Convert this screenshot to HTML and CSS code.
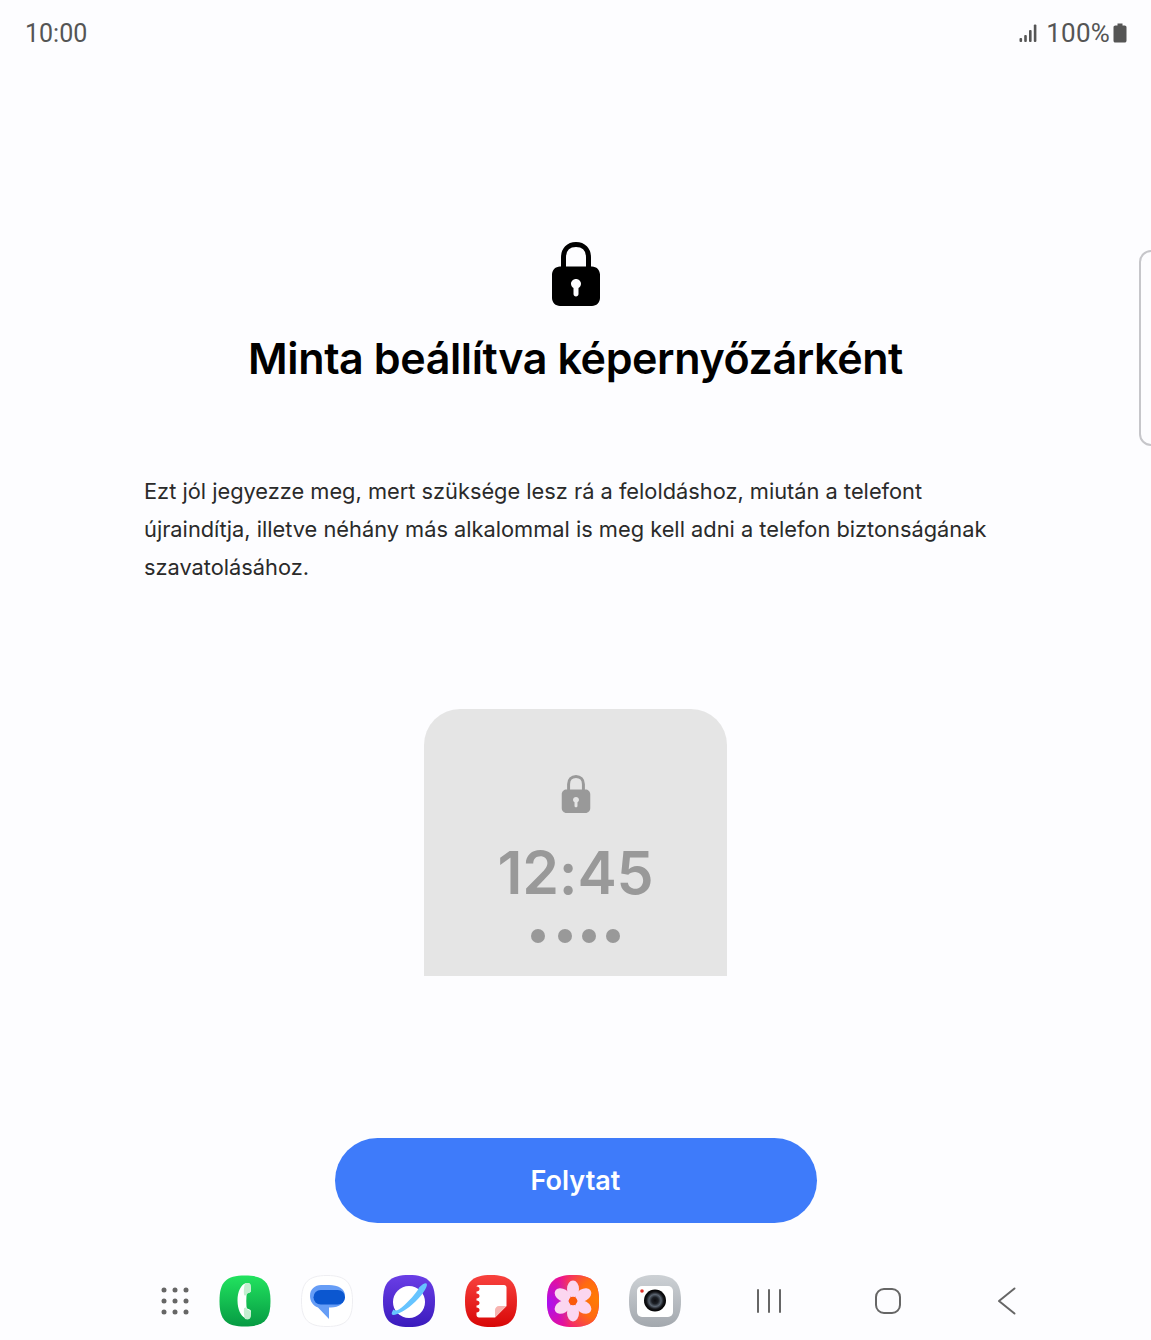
FILE: index.html
```html
<!DOCTYPE html>
<html lang="hu">
<head>
    <meta charset="UTF-8">
    <meta name="viewport" content="width=device-width, initial-scale=1.0">
    <title>Minta beállítva képernyőzárként</title>
    <link rel="stylesheet" href="styles.css">
</head>
<body>
    <div class="screen">
        <div class="status-bar">
            <span class="status-time">10:00</span>
            <div class="status-right">
                <svg class="signal" width="18" height="20" viewBox="0 0 18 20">
                    <rect x="0.5" y="15" width="2.6" height="4" rx="1" fill="#555"/>
                    <rect x="5.2" y="12" width="2.6" height="7" rx="1" fill="#555"/>
                    <rect x="10" y="7" width="2.6" height="12" rx="1" fill="#555"/>
                    <rect x="14.8" y="1.5" width="2.6" height="17.5" rx="1" fill="#555"/>
                </svg>
                <span class="status-pct">100%</span>
                <svg class="battery" width="14" height="20" viewBox="0 0 14 20">
                    <path d="M4.5 0.5h5v2h2.2c1 0 1.8.8 1.8 1.8v13.4c0 1-.8 1.8-1.8 1.8H2.3c-1 0-1.8-.8-1.8-1.8V4.300c0-1 .8-1.800 1.800-1.800h2.200z" fill="#555"/>
                </svg>
            </div>
        </div>

        <div class="edge-handle"></div>

        <main class="content">
            <svg class="lock-icon" width="48" height="64" viewBox="0 0 48 64">
                <path d="M11.500 28V15.500C11.500 7.500 16.500 2.500 24 2.500S36.500 7.500 36.500 15.500V28" fill="none" stroke="#000" stroke-width="5"/>
                <path d="M8 24.500h32c4.400 0 8 3.600 8 8V56c0 4.400-3.600 8-8 8H8c-4.400 0-8-3.600-8-8V32.500c0-4.400 3.600-8 8-8zM24 37c-2.800 0-5 2.200-5 4.800 0 1.800 1 3.400 2.500 4.200v6c0 1.400 1.100 2.500 2.500 2.500s2.500-1.100 2.500-2.500v-6c1.500-.8 2.500-2.400 2.500-4.200 0-2.600-2.200-4.800-5-4.800z" fill="#000" fill-rule="evenodd"/>
            </svg>
            <h1>Minta beállítva képernyőzárként</h1>
            <p class="desc">Ezt jól jegyezze meg, mert szüksége lesz rá a feloldáshoz, miután a telefont<br>újraindítja, illetve néhány más alkalommal is meg kell adni a telefon biztonságának<br>szavatolásához.</p>

            <div class="preview">
                <svg class="preview-lock" width="30" height="38" viewBox="0 0 48 64">
                    <path d="M11.500 28V15.500C11.500 7.500 16.500 2.500 24 2.500S36.500 7.500 36.500 15.500V28" fill="none" stroke="#999" stroke-width="5"/>
                    <path d="M8 24.500h32c4.400 0 8 3.600 8 8V56c0 4.400-3.600 8-8 8H8c-4.400 0-8-3.600-8-8V32.500c0-4.400 3.600-8 8-8zM24 37c-2.800 0-5 2.200-5 4.800 0 1.800 1 3.400 2.500 4.200v6c0 1.400 1.100 2.500 2.500 2.500s2.500-1.100 2.500-2.500v-6c1.500-.8 2.500-2.400 2.500-4.200 0-2.600-2.200-4.800-5-4.800z" fill="#999" fill-rule="evenodd"/>
                </svg>
                <div class="preview-time">12:45</div>
                <div class="preview-dots">
                    <span class="dot dot-first"></span>
                    <span class="dot"></span>
                    <span class="dot"></span>
                    <span class="dot"></span>
                </div>
            </div>

            <button class="continue-btn">Folytat</button>
        </main>

        <div class="dock">
            <svg class="apps-icon" width="28" height="28" viewBox="0 0 28 28" fill="#666">
                <circle cx="3" cy="3" r="2.500"/><circle cx="14" cy="3" r="2.500"/><circle cx="25" cy="3" r="2.500"/>
                <circle cx="3" cy="14" r="2.500"/><circle cx="14" cy="14" r="2.500"/><circle cx="25" cy="14" r="2.500"/>
                <circle cx="3" cy="25" r="2.500"/><circle cx="14" cy="25" r="2.500"/><circle cx="25" cy="25" r="2.500"/>
            </svg>

            <!-- telefon -->
            <svg class="app-icon" width="52" height="52" viewBox="0 0 52 52">
                <defs>
                    <linearGradient id="phoneBg" x1="0" y1="0" x2="0" y2="1">
                        <stop offset="0" stop-color="#22e35f"/>
                        <stop offset="1" stop-color="#069a43"/>
                    </linearGradient>
                </defs>
                <path d="M26 .5C45 .5 51.500 7 51.500 26S45 51.500 26 51.500 .5 45 .5 26 7 .5 26 .5z" fill="url(#phoneBg)"/>
                <path d="M26 8.500c2.500-1 5-.5 5.500 1.500l.5 5c.2 1.500-.8 2.600-2.500 3-1.200.4-2 1-2 2.500-.3 3.500-.3 7.500 0 11 .1 1.500.8 2.100 2 2.500 1.700.4 2.700 1.500 2.500 3l-.5 4.500c-.5 2-3 2.500-5.500 1.500-4-2-7.500-8.500-7.500-17.500s3.500-15.500 7.500-17z" fill="#fff"/>
                <path d="M26 8.500c2.500-1 5-.5 5.500 1.500l.5 5c.2 1.500-.8 2.600-2.500 3-1.200.4-2 1-2 2.500-1 0-2-.2-2.500-.8-.4-3.500-.1-8 1-11.200zM27.500 32.500c.1 1.500.8 2.100 2 2.500 1.700.4 2.700 1.500 2.500 3l-.5 4.500c-.5 2-3 2.500-5.500 1.500-1-3-1.400-7-1-10.800.5-.5 1.500-.7 2.500-.7z" fill="#c4eed0"/>
            </svg>

            <!-- üzenetek -->
            <svg class="app-icon" width="52" height="52" viewBox="0 0 52 52">
                <path d="M26 .5C44.700.5 51.500 7.300 51.500 26S44.700 51.500 26 51.500.5 44.700.5 26 7.300.5 26 .500z" fill="#fff" stroke="#eeeef2"/>
                <path d="M20 10h8c9 0 16 3.500 16 11 0 7-6 11.500-14 11.500h-2V44L17 32.500C12 31 9 26 9 21c0-7 5-11 11-11z" fill="#669df6"/>
                <rect x="12.500" y="15" width="31.500" height="14.500" rx="7.250" fill="#0b57d0"/>
            </svg>

            <!-- böngésző -->
            <svg class="app-icon" width="52" height="52" viewBox="0 0 52 52">
                <defs>
                    <linearGradient id="browserBg" x1="0" y1="0" x2="0" y2="1">
                        <stop offset="0" stop-color="#6a3ee6"/>
                        <stop offset="1" stop-color="#3a1bbd"/>
                    </linearGradient>
                </defs>
                <path d="M26 0C45 0 52 7 52 26S45 52 26 52 0 45 0 26 7 0 26 0z" fill="url(#browserBg)"/>
                <circle cx="26" cy="27" r="16" fill="#fff"/>
                <path d="M43.500 8.500c1.800 1.800-2 9-11 18S11 41.500 9 39.500c-1-1 .5-3.500 1.500-5 2 2 5 1 11-4.500 7-6.500 13-13.500 14.500-17.500 3.500-3.500 6.500-5 7.500-4z" fill="#66c4ff"/>
            </svg>

            <!-- jegyzetek -->
            <svg class="app-icon" width="52" height="52" viewBox="0 0 52 52">
                <defs>
                    <linearGradient id="notesBg" x1="0" y1="0" x2="0" y2="1">
                        <stop offset="0" stop-color="#f8423e"/>
                        <stop offset="1" stop-color="#d80707"/>
                    </linearGradient>
                </defs>
                <path d="M26 0C45 0 52 7 52 26S45 52 26 52 0 45 0 26 7 0 26 0z" fill="url(#notesBg)"/>
                <path d="M14 10h25c1.500 0 2.500 1 2.500 2.500V31L30 42.500H14c-1.500 0-2.500-1-2.500-2.500v-2.500c2 0 3-1 3-2.500s-1-2.500-3-2.500v-2c2 0 3-1 3-2.500s-1-2.500-3-2.500v-2c2 0 3-1 3-2.500s-1-2.500-3-2.500v-2c2 0 3-1 3-2.500s-1-2.500-3-2.500C11.500 11 12.500 10 14 10z" fill="#fff"/>
                <path d="M41.500 31L30 42.500V35c0-2.200 1.800-4 4-4z" fill="#f7b4b0"/>
            </svg>

            <!-- galéria -->
            <svg class="app-icon" width="52" height="52" viewBox="0 0 52 52">
                <defs>
                    <radialGradient id="galleryLeft" cx="0" cy="0.55" r="0.6">
                        <stop offset="0" stop-color="#a80ff5"/>
                        <stop offset="1" stop-color="#a80ff5" stop-opacity="0"/>
                    </radialGradient>
                    <radialGradient id="galleryRight" cx="1" cy="0.45" r="0.85">
                        <stop offset="0" stop-color="#ff7d05"/>
                        <stop offset="0.45" stop-color="#ff6a10"/>
                        <stop offset="1" stop-color="#ff7d05" stop-opacity="0"/>
                    </radialGradient>
                </defs>
                <clipPath id="galleryClip">
                    <path d="M26 0C45 0 52 7 52 26S45 52 26 52 0 45 0 26 7 0 26 0z"/>
                </clipPath>
                <g clip-path="url(#galleryClip)">
                    <rect width="52" height="52" fill="#f0108c"/>
                    <rect width="52" height="52" fill="url(#galleryRight)"/>
                    <rect width="52" height="52" fill="url(#galleryLeft)"/>
                </g>
                <g fill="#fbd6f0">
                    <ellipse cx="26" cy="14" rx="6" ry="8.500"/>
                    <ellipse cx="26" cy="38" rx="6" ry="8.500"/>
                    <ellipse cx="26" cy="14" rx="6" ry="8.500" transform="rotate(60 26 26)"/>
                    <ellipse cx="26" cy="14" rx="6" ry="8.500" transform="rotate(120 26 26)"/>
                    <ellipse cx="26" cy="14" rx="6" ry="8.500" transform="rotate(240 26 26)"/>
                    <ellipse cx="26" cy="14" rx="6" ry="8.500" transform="rotate(300 26 26)"/>
                </g>
                <circle cx="26" cy="26" r="4.200" fill="#fa5a0a"/>
            </svg>

            <!-- kamera -->
            <svg class="app-icon" width="52" height="52" viewBox="0 0 52 52">
                <defs>
                    <linearGradient id="cameraBg" x1="0" y1="0" x2="0" y2="1">
                        <stop offset="0" stop-color="#cdd1d5"/>
                        <stop offset="1" stop-color="#a3a8ae"/>
                    </linearGradient>
                    <radialGradient id="lensBg">
                        <stop offset="0" stop-color="#0c0c10"/>
                        <stop offset="0.3" stop-color="#1c2026"/>
                        <stop offset="0.55" stop-color="#5a6470"/>
                        <stop offset="0.78" stop-color="#15161a"/>
                        <stop offset="1" stop-color="#000"/>
                    </radialGradient>
                </defs>
                <path d="M26 0C45 0 52 7 52 26S45 52 26 52 0 45 0 26 7 0 26 0z" fill="url(#cameraBg)"/>
                <rect x="8" y="11" width="36" height="31" rx="5" fill="#fff"/>
                <circle cx="26" cy="25.500" r="11" fill="url(#lensBg)"/>
                <circle cx="13" cy="16" r="1.800" fill="#e0352b"/>
            </svg>

            <div class="nav-btn nav-first">
                <svg width="26" height="26" viewBox="0 0 26 26" fill="#666">
                    <rect x="1" y="1" width="2" height="24" rx="1"/>
                    <rect x="12" y="1" width="2" height="24" rx="1"/>
                    <rect x="23" y="1" width="2" height="24" rx="1"/>
                </svg>
            </div>
            <div class="nav-btn">
                <svg width="26" height="26" viewBox="0 0 26 26">
                    <rect x="1" y="1" width="24" height="24" rx="8" fill="none" stroke="#666" stroke-width="2"/>
                </svg>
            </div>
            <div class="nav-btn">
                <svg width="20" height="28" viewBox="0 0 20 28">
                    <path d="M17.500 1.500L2 14l15.500 12.500" fill="none" stroke="#666" stroke-width="2" stroke-linecap="round" stroke-linejoin="round"/>
                </svg>
            </div>
        </div>
    </div>
</body>
</html>
```

FILE: styles.css
```css
html, body {
    margin: 0;
    padding: 0;
}
body {
    font-family: Inter, "Noto Sans", sans-serif;
    background-color: #fdfdff;
}
.screen {
    position: relative;
    width: 1151px;
    height: 1340px;
    overflow: hidden;
    background-color: #fdfdff;
}
.status-bar {
    display: flex;
    justify-content: space-between;
    align-items: center;
    height: 66px;
    padding: 0 24px 0 25px;
    color: #555;
    font-family: Roboto, sans-serif;
    font-size: 26px;
}
.status-time {
    font-size: 25px;
}
.status-right {
    display: flex;
    align-items: center;
}
.status-pct {
    margin-left: 9px;
    margin-right: 3px;
    letter-spacing: 0.2px;
}
.edge-handle {
    position: absolute;
    left: 1139px;
    top: 250px;
    width: 20px;
    height: 192px;
    border: 2px solid #c6c6ca;
    border-radius: 12px 0 0 12px;
}
.content {
    display: flex;
    flex-direction: column;
    align-items: center;
}
.lock-icon {
    display: block;
    margin-top: 176px;
}
h1 {
    margin: 22px 0 0;
    font-size: 43px;
    line-height: 60px;
    font-weight: 600;
    letter-spacing: -0.4px;
    color: #000;
    white-space: nowrap;
}
.desc {
    align-self: flex-start;
    margin: 84px 0 0 144px;
    font-size: 21.8px;
    line-height: 38px;
    color: #2a2a2a;
    white-space: nowrap;
}
.preview {
    display: flex;
    flex-direction: column;
    align-items: center;
    box-sizing: border-box;
    width: 303px;
    height: 267px;
    margin-top: 123px;
    padding-top: 66px;
    background-color: #e5e5e5;
    border-radius: 36px 36px 0 0;
}
.preview-lock {
    display: block;
}
.preview-time {
    margin-top: 25px;
    font-size: 59px;
    line-height: 70px;
    font-weight: 600;
    letter-spacing: -0.2px;
    color: #999;
}
.preview-dots {
    display: flex;
    gap: 10px;
    margin-top: 21px;
}
.dot {
    width: 14px;
    height: 14px;
    border-radius: 50%;
    background-color: #999;
}
.dot-first {
    margin-right: 3px;
}
.continue-btn {
    width: 482px;
    height: 85px;
    margin-top: 162px;
    border: none;
    border-radius: 43px;
    background-color: #3e7bfa;
    color: #fff;
    font-family: inherit;
    font-size: 27px;
    font-weight: 600;
    cursor: pointer;
}
.dock {
    display: flex;
    align-items: center;
    gap: 30px;
    height: 52px;
    margin-top: 52px;
    padding-left: 161px;
}
.app-icon, .apps-icon {
    display: block;
    flex-shrink: 0;
}
.nav-btn {
    display: flex;
    justify-content: center;
    align-items: center;
    width: 119px;
    margin-left: -30px;
}
.nav-first {
    margin-left: -2px;
}
```
